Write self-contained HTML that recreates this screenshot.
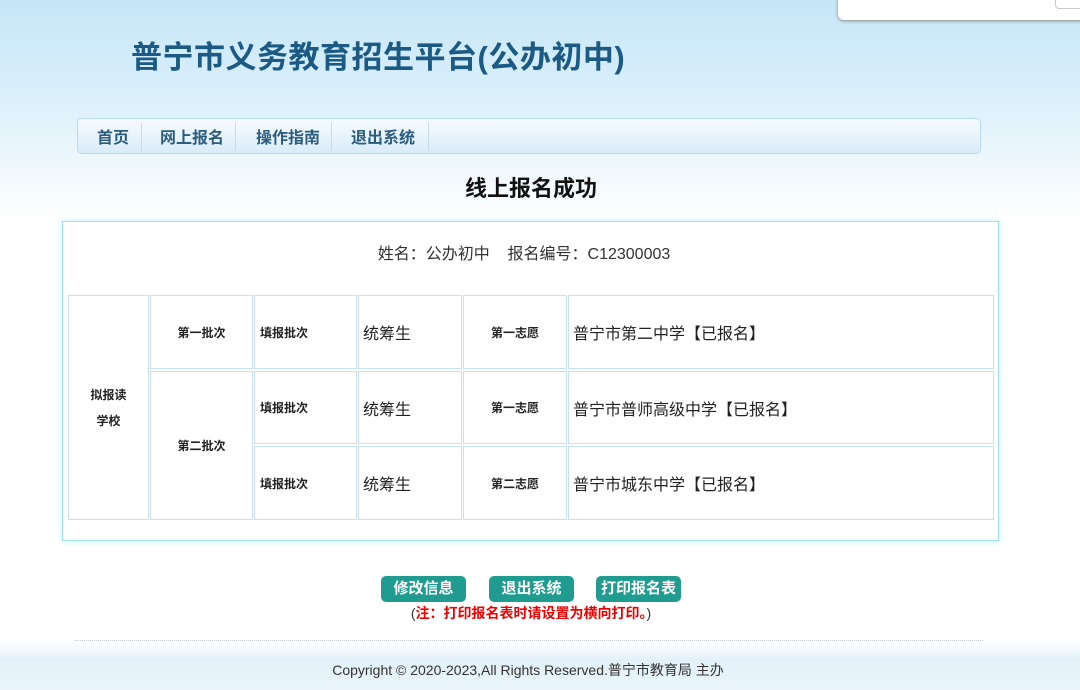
<!DOCTYPE html>
<html><head><meta charset="utf-8"><style>
*{margin:0;padding:0;box-sizing:border-box}
body{width:1080px;height:690px;overflow:hidden;position:relative;font-family:"Liberation Sans","Noto Sans CJK SC",sans-serif;background:linear-gradient(180deg,#c6e6f8 0,#d9effa 90px,#eaf6fc 150px,#fff 220px,#fff 640px,#e3f1fa 660px,#eaf5fb 690px)}
.pop{position:absolute;left:838px;top:-10px;width:260px;height:30px;background:#fff;border-radius:6px;box-shadow:0 1px 3px #888}
.pop i{position:absolute;left:217px;top:0;width:50px;height:19px;border:1px solid #ccc;border-radius:4px}
h1{position:absolute;left:131px;top:32px;font-size:31px;color:#1c5a86;font-weight:bold;letter-spacing:0.5px}
.nav{position:absolute;left:77px;top:118px;width:904px;height:36px;border:1px solid #b8dcf0;border-radius:5px;background:linear-gradient(#f6fbfe,#d8ecf8)}
.nav span{position:absolute;top:5px;font-size:16px;font-weight:bold;color:#2c5c7e}
.nav b{position:absolute;top:4px;width:1px;height:28px;background:#c8dbe6}
h2{position:absolute;left:0;width:1062px;top:171px;text-align:center;font-size:22px;font-weight:bold;color:#111}
.box{position:absolute;left:62px;top:221px;width:937px;height:320px;background:#fff;border:1px solid #9fe0ef;box-shadow:0 0 6px #bdeef7}
.info{position:absolute;left:0;width:922px;top:18px;text-align:center;font-size:16px;color:#333}
.c{position:absolute;border:1px solid #c6e2f2;display:flex;align-items:center;font-size:12px;font-weight:bold;color:#222}
.ctr{justify-content:center;text-align:center}
.big{font-size:16px;font-weight:normal;padding-left:4px;color:#222}
.btn{position:absolute;top:576px;height:26px;width:85px;border-radius:5px;background:#1f9c8f;color:#fff;font-weight:bold;font-size:15px;text-align:center;line-height:26px}
.note{position:absolute;top:603px;left:0;width:1062px;text-align:center;font-size:14px;color:#e00;font-weight:bold}
.note em{font-style:normal;color:#333;font-weight:normal}
.hr{position:absolute;left:75px;top:640px;width:908px;border-top:1px dotted #ccc}
.foot{position:absolute;top:660px;left:0;width:1056px;text-align:center;font-size:14px;color:#333}
</style></head><body>
<div class="pop"><i></i></div>
<h1>普宁市义务教育招生平台(公办初中)</h1>
<div class="nav">
<span style="left:19px">首页</span><b style="left:63px"></b>
<span style="left:82px">网上报名</span><b style="left:157px"></b>
<span style="left:178px">操作指南</span><b style="left:253px"></b>
<span style="left:273px">退出系统</span><b style="left:350px"></b>
</div>
<h2>线上报名成功</h2>
<div class="box">
<div class="info">姓名：公办初中&nbsp;&nbsp;&nbsp;&nbsp;报名编号：C12300003</div>
</div>
<div class="c ctr" style="left:68px;top:295px;width:81px;height:225px;line-height:26px">拟报读<br>学校</div>
<div class="c ctr" style="left:150px;top:295px;width:103px;height:74px">第一批次</div>
<div class="c ctr" style="left:150px;top:371px;width:103px;height:149px">第二批次</div>
<div class="c" style="left:254px;top:295px;width:103px;height:74px;padding-left:5px">填报批次</div>
<div class="c" style="left:254px;top:371px;width:103px;height:73px;padding-left:5px">填报批次</div>
<div class="c" style="left:254px;top:446px;width:103px;height:74px;padding-left:5px">填报批次</div>
<div class="c big" style="left:358px;top:295px;width:104px;height:74px">统筹生</div>
<div class="c big" style="left:358px;top:371px;width:104px;height:73px">统筹生</div>
<div class="c big" style="left:358px;top:446px;width:104px;height:74px">统筹生</div>
<div class="c ctr" style="left:463px;top:295px;width:104px;height:74px">第一志愿</div>
<div class="c ctr" style="left:463px;top:371px;width:104px;height:73px">第一志愿</div>
<div class="c ctr" style="left:463px;top:446px;width:104px;height:74px">第二志愿</div>
<div class="c big" style="left:568px;top:295px;width:426px;height:74px">普宁市第二中学【已报名】</div>
<div class="c big" style="left:568px;top:371px;width:426px;height:73px">普宁市普师高级中学【已报名】</div>
<div class="c big" style="left:568px;top:446px;width:426px;height:74px">普宁市城东中学【已报名】</div>
<div class="btn" style="left:381px">修改信息</div>
<div class="btn" style="left:489px">退出系统</div>
<div class="btn" style="left:596px">打印报名表</div>
<div class="note"><em>(</em>注：打印报名表时请设置为横向打印。<em>)</em></div>
<div class="hr"></div>
<div class="foot">Copyright © 2020-2023,All Rights Reserved.普宁市教育局 主办</div>
</body></html>
